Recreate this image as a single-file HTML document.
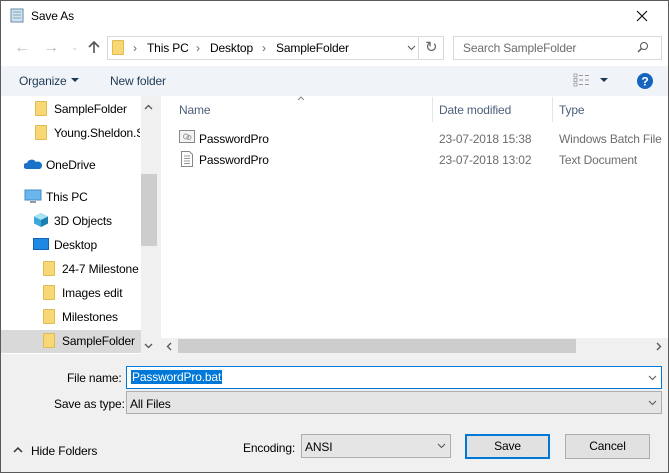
<!DOCTYPE html><html><head><style>
*{box-sizing:border-box;margin:0;padding:0}
body{width:669px;height:473px;position:relative;overflow:hidden;font-family:"Liberation Sans",sans-serif;font-size:12px;color:#000;background:#fff;letter-spacing:-0.15px}
.a{position:absolute}
.fold{position:absolute;width:12px;height:15px;background:#f8d775;border:1px solid #e0b94f;border-radius:1px}
.t{position:absolute;white-space:nowrap}
</style></head><body>
<div class="a" style="left:0;top:0;width:669px;height:473px;border:1px solid #5a5a5a"></div>
<svg class="a" style="left:9px;top:7px" width="16" height="16"><rect x="2" y="2" width="12" height="13" fill="#cfe3f3" stroke="#6a8aa8"/><path d="M4 5h8M4 8h8M4 11h8" stroke="#8aa" /></svg>
<div class="t" style="left:31px;top:9px;font-size:12px">Save As</div>
<svg class="a" style="left:636px;top:10px" width="12" height="12"><path d="M1 1L11 11M11 1L1 11" stroke="#111" stroke-width="1.2"/></svg>
<div class="t" style="left:14px;top:39px;color:#bbb;font-size:16px">←</div>
<div class="t" style="left:43px;top:39px;color:#bbb;font-size:16px">→</div>
<div class="t" style="left:71px;top:42px;color:#ccc;font-size:9px">⌄</div>
<svg class="a" style="left:87px;top:40px" width="14" height="14"><path d="M7 13V2M2 7l5-5 5 5" stroke="#555" stroke-width="1.6" fill="none"/></svg>
<div class="a" style="left:107px;top:36px;width:337px;height:24px;border:1px solid #d9d9d9"></div>
<div class="a" style="left:418px;top:36px;width:1px;height:24px;background:#d9d9d9"></div>
<div class="fold" style="left:112px;top:40px"></div>
<div class="t" style="left:133px;top:41px;color:#666">›</div>
<div class="t" style="left:147px;top:41px">This PC</div>
<div class="t" style="left:196px;top:41px;color:#666">›</div>
<div class="t" style="left:210px;top:41px">Desktop</div>
<div class="t" style="left:262px;top:41px;color:#666">›</div>
<div class="t" style="left:276px;top:41px">SampleFolder</div>
<svg class="a" style="left:407px;top:45px" width="9" height="6"><path d="M1 1l3.5 3.5L8 1" stroke="#555" fill="none"/></svg>
<div class="t" style="left:425px;top:38px;color:#666;font-size:15px">↻</div>
<div class="a" style="left:453px;top:36px;width:209px;height:24px;border:1px solid #d9d9d9"></div>
<div class="t" style="left:463px;top:41px;color:#6d6d6d">Search SampleFolder</div>
<svg class="a" style="left:637px;top:41px" width="12" height="12"><circle cx="7" cy="5" r="3.5" stroke="#555" fill="none"/><path d="M4.5 7.5L1 11" stroke="#555" stroke-width="1.4"/></svg>
<div class="a" style="left:1px;top:66px;width:667px;height:30px;background:#f0f4f9"></div>
<div class="t" style="left:19px;top:74px;color:#1e3954">Organize</div>
<svg class="a" style="left:71px;top:78px" width="8" height="5"><path d="M0 0h8L4 4z" fill="#1e3954"/></svg>
<div class="t" style="left:110px;top:74px;color:#1e3954">New folder</div>
<svg class="a" style="left:573px;top:73px" width="18" height="14"><path d="M1 1h3v3H1zM1 5.5h3v3H1zM1 10h3v3H1z" stroke="#999" fill="none" stroke-width=".8"/><path d="M6 2.5h4M12 2.5h4M6 7h4M12 7h4M6 11.5h4M12 11.5h4" stroke="#999"/></svg>
<svg class="a" style="left:600px;top:78px" width="8" height="5"><path d="M0 0h8L4 4z" fill="#1e3954"/></svg>
<svg class="a" style="left:637px;top:73px" width="16" height="16"><circle cx="8" cy="8" r="8" fill="#1565c0"/><text x="8" y="12.5" font-size="12" font-weight="bold" fill="#fff" text-anchor="middle" font-family="Liberation Sans">?</text></svg>
<div class="a" style="left:1px;top:330px;width:140px;height:23px;background:#d9d9d9"></div>
<div class="a" style="left:141px;top:96px;width:16px;height:258px;background:#f0f0f0"></div>
<div class="a" style="left:141px;top:174px;width:16px;height:72px;background:#cdcdcd"></div>
<svg class="a" style="left:144px;top:104px" width="9" height="6"><path d="M1 5l3.5-3.5L8 5" stroke="#555" stroke-width="1.3" fill="none"/></svg>
<svg class="a" style="left:144px;top:343px" width="9" height="6"><path d="M1 1l3.5 3.5L8 1" stroke="#555" stroke-width="1.3" fill="none"/></svg>
<div class="a" style="left:157px;top:96px;width:4px;height:258px;background:#f0f0f0"></div>
<div class="fold" style="left:35px;top:101px"></div><div class="t" style="left:54px;top:102px">SampleFolder</div>
<div class="fold" style="left:35px;top:125px"></div><div class="t" style="left:54px;top:126px;width:86px;overflow:hidden">Young.Sheldon.S</div>
<svg class="a" style="left:24px;top:158px" width="18" height="12"><path d="M2 11a3 3 0 0 1 1-6 5 5 0 0 1 9-1 3.5 3.5 0 0 1 4 7z" fill="#1a73c8"/></svg>
<div class="t" style="left:46px;top:158px">OneDrive</div>
<svg class="a" style="left:24px;top:189px" width="18" height="16"><rect x="1" y="1" width="16" height="10" fill="#69b7ef" stroke="#4a8ac0"/><rect x="6" y="12" width="6" height="2" fill="#999"/></svg>
<div class="t" style="left:46px;top:190px">This PC</div>
<svg class="a" style="left:33px;top:212px" width="16" height="16"><path d="M8 1l7 3.5v7L8 15 1 11.5v-7z" fill="#3ba8d9"/><path d="M1 4.5L8 8l7-3.5L8 1z" fill="#a8e2f5"/><path d="M8 8v7l7-3.5v-7z" fill="#1c7fb0"/></svg>
<div class="t" style="left:54px;top:214px">3D Objects</div>
<div class="a" style="left:33px;top:238px;width:16px;height:12px;background:#1e88e5;border:1px solid #1563b0"></div>
<div class="t" style="left:54px;top:238px">Desktop</div>
<div class="fold" style="left:43px;top:261px"></div><div class="t" style="left:62px;top:262px;width:79px;overflow:hidden">24-7 Milestone</div>
<div class="fold" style="left:43px;top:285px"></div><div class="t" style="left:62px;top:286px">Images edit</div>
<div class="fold" style="left:43px;top:309px"></div><div class="t" style="left:62px;top:310px">Milestones</div>
<div class="fold" style="left:43px;top:333px"></div><div class="t" style="left:62px;top:334px">SampleFolder</div>
<svg class="a" style="left:297px;top:96px" width="8" height="5"><path d="M1 4l3-3 3 3" stroke="#888" fill="none"/></svg>
<div class="t" style="left:179px;top:103px;color:#4c607a">Name</div>
<div class="a" style="left:432px;top:97px;width:1px;height:25px;background:#e5e5e5"></div>
<div class="t" style="left:439px;top:103px;color:#4c607a">Date modified</div>
<div class="a" style="left:552px;top:97px;width:1px;height:25px;background:#e5e5e5"></div>
<div class="t" style="left:559px;top:103px;color:#4c607a">Type</div>
<svg class="a" style="left:179px;top:130px" width="16" height="14"><rect x=".5" y=".5" width="15" height="12" fill="#f4f4f4" stroke="#888"/><circle cx="7" cy="6.5" r="2.5" stroke="#999" fill="none"/><circle cx="10" cy="7.5" r="2" stroke="#999" fill="none"/></svg>
<div class="t" style="left:199px;top:132px">PasswordPro</div>
<div class="t" style="left:439px;top:132px;color:#6d6d6d">23-07-2018 15:38</div>
<div class="t" style="left:559px;top:132px;color:#6d6d6d">Windows Batch File</div>
<svg class="a" style="left:181px;top:151px" width="12" height="16"><path d="M.5 .5h8l3 3v12H.5z" fill="#fff" stroke="#888"/><path d="M3 5h6M3 7.5h6M3 10h6M3 12.5h6" stroke="#999"/></svg>
<div class="t" style="left:199px;top:153px">PasswordPro</div>
<div class="t" style="left:439px;top:153px;color:#6d6d6d">23-07-2018 13:02</div>
<div class="t" style="left:559px;top:153px;color:#6d6d6d">Text Document</div>
<div class="a" style="left:161px;top:338px;width:507px;height:16px;background:#f0f0f0"></div>
<div class="a" style="left:178px;top:339px;width:398px;height:14px;background:#cdcdcd"></div>
<svg class="a" style="left:166px;top:342px" width="6" height="9"><path d="M5 1L1.5 4.5 5 8" stroke="#555" stroke-width="1.3" fill="none"/></svg>
<svg class="a" style="left:656px;top:342px" width="6" height="9"><path d="M1 1l3.5 3.5L1 8" stroke="#555" stroke-width="1.3" fill="none"/></svg>
<div class="a" style="left:1px;top:354px;width:667px;height:118px;background:#f0f0f0"></div>
<div class="t" style="left:67px;top:371px">File name:</div>
<div class="a" style="left:126px;top:366px;width:536px;height:23px;background:#fff;border:1px solid #0078d7"></div>
<div class="t" style="left:131px;top:370px;background:#0078d7;color:#fff;padding:0 1px">PasswordPro.bat</div>
<svg class="a" style="left:648px;top:375px" width="9" height="6"><path d="M1 1l3.5 3.5L8 1" stroke="#555" fill="none"/></svg>
<div class="t" style="left:54px;top:397px">Save as type:</div>
<div class="a" style="left:126px;top:391px;width:536px;height:23px;background:#e5e5e5;border:1px solid #adadad"></div>
<div class="t" style="left:130px;top:397px">All Files</div>
<svg class="a" style="left:648px;top:400px" width="9" height="6"><path d="M1 1l3.5 3.5L8 1" stroke="#555" fill="none"/></svg>
<svg class="a" style="left:13px;top:446px" width="10" height="7"><path d="M1 6l4-4 4 4" stroke="#333" stroke-width="1.5" fill="none"/></svg>
<div class="t" style="left:31px;top:444px">Hide Folders</div>
<div class="t" style="left:243px;top:441px">Encoding:</div>
<div class="a" style="left:301px;top:434px;width:150px;height:24px;background:#e5e5e5;border:1px solid #adadad"></div>
<div class="t" style="left:305px;top:440px">ANSI</div>
<svg class="a" style="left:437px;top:443px" width="9" height="6"><path d="M1 1l3.5 3.5L8 1" stroke="#555" fill="none"/></svg>
<div class="a" style="left:465px;top:434px;width:85px;height:25px;background:#e1e1e1;border:2px solid #0078d7;text-align:center;line-height:21px">Save</div>
<div class="a" style="left:565px;top:434px;width:85px;height:25px;background:#e1e1e1;border:1px solid #adadad;text-align:center;line-height:23px">Cancel</div>
</body></html>
